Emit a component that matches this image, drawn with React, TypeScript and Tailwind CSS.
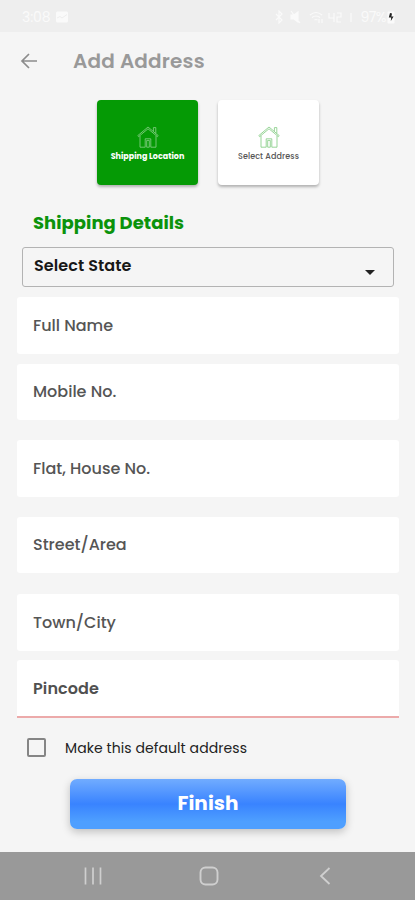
import { useState } from 'react'
import clsx from 'clsx'

const fields = [
  { label: 'Full Name', className: 'mt-[10px]' },
  { label: 'Mobile No.', className: 'mt-[10px]' },
  { label: 'Flat, House No.', className: 'mt-[20px]' },
  { label: 'Street/Area', className: 'mt-[20px]' },
  { label: 'Town/City', className: 'mt-[21px]' },
]

function HouseIcon({ className }: { className?: string }) {
  return (
    <svg viewBox="0 0 22 22" fill="none" stroke="currentColor" strokeWidth="0.8" className={className}>
      <path d="M0.8 9.6 11 1l10.2 8.6-.8 1L11 2.8 1.6 10.6z" />
      <path d="M3 9.8v11.4h5.2v-8.4h5.6v8.4H19V9.8M9.7 21.2v-6.8h2.6v6.8zM16.4 5.3V1.6h2.4v5.8" />
    </svg>
  )
}

function StatusBar() {
  return (
    <div className="h-8 shrink-0 bg-[#eeeeee] flex items-center justify-between pl-[22px] pr-[20px] pt-[2px] text-[#fafafa]">
      <div className="flex items-center gap-[6px]">
        <span className="text-[14px] leading-4 tracking-[-0.1px]">3:08</span>
        <svg viewBox="0 0 12 12" className="w-3 h-3">
          <rect y="0.5" width="12" height="11" rx="1.5" fill="currentColor" />
          <path d="M1 7 4 5.5 6 7l5-3.5" stroke="#eeeeee" fill="none" />
        </svg>
      </div>
      <div className="flex items-center">
        <svg viewBox="0 0 86 14" fill="none" stroke="currentColor" strokeWidth="1.2" className="w-[86px] h-[14px]">
          <path d="m2 4 6 6-3 3V1l3 3-6 6" />
          <path d="M17 5h3l4-3v10l-4-3h-3zM17 1l9 12" fill="currentColor" />
          <path d="M36 5q6-5 12 0M38 7.5q4-3 8 0M40.5 10q1.5-1 3 0M45 9v4M48 9v4" />
          <path d="M55 3v5h5M60 3v9M63 3h4v4h-4v5h4M77 12V3" />
        </svg>
        <span className="text-[14px] leading-4 tracking-[-0.5px]">97%</span>
        <svg viewBox="0 0 8 14" className="w-2 h-[14px] ml-px">
          <rect x="0.5" y="1.5" width="7" height="12" rx="1" fill="currentColor" />
          <path d="m3 3-1.2 4.5h2.4L3.8 11 6.6 6.6H4.4L5 3.6z" fill="#222222" />
        </svg>
      </div>
    </div>
  )
}

export default function App() {
  const [tab, setTab] = useState('shipping')
  const [isDefault, setIsDefault] = useState(false)

  return (
    <div className="w-full h-[900px] flex flex-col bg-[#f5f5f5] overflow-hidden font-['Poppins','Inter',sans-serif]">
      <StatusBar />

      <header className="h-[58px] shrink-0 flex items-center pl-[20px]">
        <svg viewBox="0 0 18 18" fill="none" stroke="#8c8c8c" strokeWidth="1.7" className="w-[18px] h-[18px]">
          <path d="M17 9H2M9 2 2 9l7 7" />
        </svg>
        <h1 className="ml-[35px] text-[20px] leading-7 font-semibold tracking-[0.17px] text-[#999999]">Add Address</h1>
      </header>

      <div className="mt-[10px] h-[85px] shrink-0 flex justify-center gap-5 pl-px">
        <button
          onClick={() => setTab('shipping')}
          className={clsx(
            'w-[101px] h-[85px] rounded-[4px] flex flex-col items-center pt-[26px] shadow-[0_2px_3px_rgba(0,0,0,0.28)]',
            tab === 'shipping' ? 'bg-[#059a05] text-white' : 'bg-white text-[#444444]'
          )}
        >
          <HouseIcon className="w-[22px] h-[22px] text-[#8bd08b]" />
          <span className="mt-[3px] text-[8px] leading-3 font-bold whitespace-nowrap">Shipping Location</span>
        </button>
        <button
          onClick={() => setTab('select')}
          className={clsx(
            'w-[101px] h-[85px] rounded-[4px] flex flex-col items-center pt-[26px] shadow-[0_2px_3px_rgba(0,0,0,0.28)]',
            tab === 'select' ? 'bg-[#059a05] text-white' : 'bg-white text-[#555555]'
          )}
        >
          <HouseIcon className="w-[22px] h-[22px] text-[#7fca7f]" />
          <span className="mt-[3px] text-[8px] leading-3 font-medium tracking-[0.1px] whitespace-nowrap">Select Address</span>
        </button>
      </div>

      <h2 className="mt-[24px] ml-[33px] text-[18px] leading-7 font-bold tracking-[0.02px] text-[#0b930b]">Shipping Details</h2>

      <div className="mt-[10px] mx-[22px] mr-[21px] h-[40px] shrink-0 border border-[#b3b3b3] rounded-[3px] flex justify-between pl-[11px] pr-[18px]">
        <span className="pt-[6px] text-[16px] leading-6 font-semibold tracking-[0.08px] text-[#181818]">Select State</span>
        <svg viewBox="0 0 10 5" className="mt-[22px] w-[10px] h-[5px]">
          <path d="M0 0h10L5 5z" fill="#222222" />
        </svg>
      </div>

      {fields.map((field) => (
        <div
          key={field.label}
          className={clsx('mx-[17px] mr-[16px] h-[56.5px] shrink-0 bg-white rounded-[3px] flex items-center pl-[16px] pt-px', field.className)}
        >
          <span className="text-[16px] leading-6 font-medium text-[#555555]">{field.label}</span>
        </div>
      ))}

      <div className="mt-[9px] mx-[17px] mr-[16px] h-[58px] shrink-0 bg-white rounded-t-[3px] border-b-2 border-[#ecaaaa] flex items-center pl-[16px] pt-[2px]">
        <span className="text-[16px] leading-6 font-semibold tracking-[0.1px] text-[#505050]">Pincode</span>
      </div>

      <label className="mt-[20px] ml-[27px] h-5 shrink-0 flex items-center">
        <input
          type="checkbox"
          checked={isDefault}
          onChange={(e) => setIsDefault(e.target.checked)}
          className="appearance-none w-[19px] h-[19px] border-2 border-[#858585] rounded-[2px] checked:bg-[#059a05]"
        />
        <span className="ml-[19px] text-[14px] leading-5 tracking-[0.08px] text-[#222222]">Make this default address</span>
      </label>

      <button className="mt-[21px] ml-[70px] w-[276px] h-[50px] shrink-0 rounded-[7px] pb-[2px] bg-[linear-gradient(to_bottom,#71acff_0%,#3983ff_50%,#4e9fff_85%,#4e9fff_100%)] shadow-[0_3px_8px_rgba(0,0,0,0.22)] text-[20px] font-bold tracking-[0.05px] text-white">
        Finish
      </button>

      <nav className="mt-auto h-12 shrink-0 bg-[#999999] flex items-center text-[#cfcfcf]">
        <svg viewBox="0 0 18 18" fill="none" stroke="currentColor" strokeWidth="1.7" className="ml-[84px] w-[18px] h-[18px]">
          <path d="M1.5 0.5v17M9 0.5v17M16.5 0.5v17" />
        </svg>
        <svg viewBox="0 0 20 20" fill="none" stroke="currentColor" strokeWidth="1.9" className="ml-[97px] w-5 h-5">
          <rect x="1.5" y="1.5" width="17" height="17" rx="5" />
        </svg>
        <svg viewBox="0 0 12 18" fill="none" stroke="currentColor" strokeWidth="1.8" className="ml-[100px] w-3 h-[18px]">
          <path d="M10.5 1 2 9l8.5 8" />
        </svg>
      </nav>
    </div>
  )
}
